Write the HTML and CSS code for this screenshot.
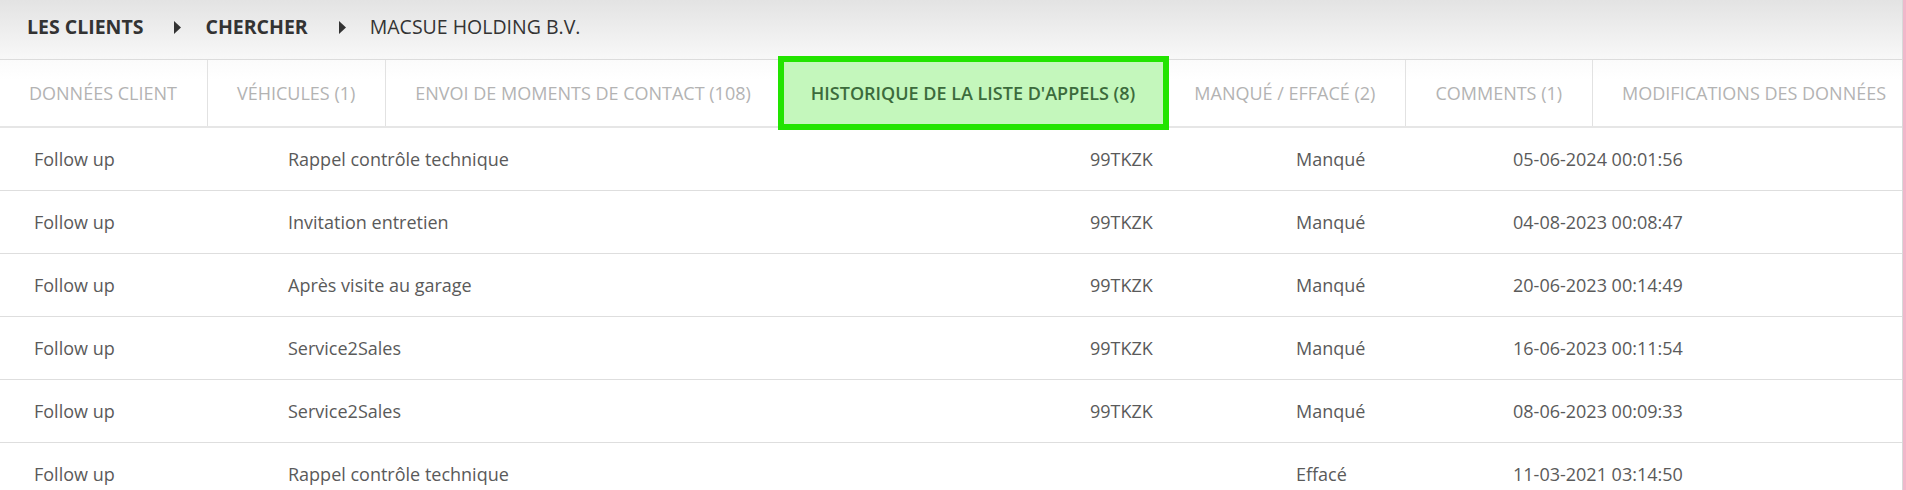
FILE: index.html
```html
<!DOCTYPE html>
<html lang="fr">
<head>
    <meta charset="UTF-8">
    <meta name="viewport" content="width=device-width, initial-scale=1.0">
    <title>Macsue Holding B.V.</title>
    <link rel="stylesheet" href="styles.css">
</head>
<body>
    <div class="page">
        <div class="breadcrumb">
            <span class="crumb strong">LES CLIENTS</span>
            <svg class="sep" width="7" height="13" viewBox="0 0 7 13"><polygon points="0,0 7,6.5 0,13" fill="#333"/></svg>
            <span class="crumb strong">CHERCHER</span>
            <svg class="sep" width="7" height="13" viewBox="0 0 7 13"><polygon points="0,0 7,6.5 0,13" fill="#333"/></svg>
            <span class="crumb">MACSUE HOLDING B.V.</span>
        </div>

        <div class="tabs">
            <div class="tab">DONNÉES CLIENT</div>
            <div class="tab">VÉHICULES (1)</div>
            <div class="tab">ENVOI DE MOMENTS DE CONTACT (108)</div>
            <div class="tab active">HISTORIQUE DE LA LISTE D'APPELS (8)</div>
            <div class="tab">MANQUÉ / EFFACÉ (2)</div>
            <div class="tab">COMMENTS (1)</div>
            <div class="tab">MODIFICATIONS DES DONNÉES</div>
        </div>

        <div class="calls">
            <div class="row">
                <span>Follow up</span><span>Rappel contrôle technique</span><span>99TKZK</span><span>Manqué</span><span>05-06-2024 00:01:56</span>
            </div>
            <div class="row">
                <span>Follow up</span><span>Invitation entretien</span><span>99TKZK</span><span>Manqué</span><span>04-08-2023 00:08:47</span>
            </div>
            <div class="row">
                <span>Follow up</span><span>Après visite au garage</span><span>99TKZK</span><span>Manqué</span><span>20-06-2023 00:14:49</span>
            </div>
            <div class="row">
                <span>Follow up</span><span>Service2Sales</span><span>99TKZK</span><span>Manqué</span><span>16-06-2023 00:11:54</span>
            </div>
            <div class="row">
                <span>Follow up</span><span>Service2Sales</span><span>99TKZK</span><span>Manqué</span><span>08-06-2023 00:09:33</span>
            </div>
            <div class="row">
                <span>Follow up</span><span>Rappel contrôle technique</span><span></span><span>Effacé</span><span>11-03-2021 03:14:50</span>
            </div>
        </div>
    </div>
</body>
</html>
```

FILE: styles.css
```css
body {
    margin: 0;
    padding: 0;
    background: #f2b6ca;
    font-family: 'Open Sans', sans-serif;
    overflow: hidden;
}
.page {
    margin-right: 3px;
    min-height: 100vh;
    background: #fff;
    border-right: 1px solid #d8d8d8;
    overflow: hidden;
}
.breadcrumb {
    display: flex;
    align-items: center;
    height: 60px;
    box-sizing: border-box;
    padding: 0 0 7px 27px;
    background: linear-gradient(to bottom, #e3e3e3, #f8f8f8);
    border-bottom: 1px solid #dcdcdc;
    font-size: 19.5px;
    color: #333;
}
.crumb.strong {
    font-weight: 700;
}
.sep {
    display: block;
    margin: 3px 24px 0 31px;
}
.tabs {
    display: flex;
    height: 66px;
    border-bottom: 2px solid #e6e6e6;
    background: linear-gradient(to bottom, #fbfbfb, #fff 30%);
    white-space: nowrap;
}
.tab {
    display: flex;
    align-items: center;
    padding: 0 30px 0 29px;
    border-right: 1px solid #e2e2e2;
    font-size: 18px;
    color: #b3b3b3;
}
.tab.active {
    position: relative;
    background: #c4f7bc;
    color: #3c6b3c;
    font-weight: 600;
    outline: 6px solid #22e400;
    outline-offset: -2px;
    border-right: none;
}
.row {
    display: grid;
    grid-template-columns: 254px 802px 206px 217px 1fr;
    align-items: center;
    height: 62px;
    padding-left: 34px;
    border-bottom: 1px solid #dedede;
    font-size: 18px;
    color: #5a5a5a;
}
```
